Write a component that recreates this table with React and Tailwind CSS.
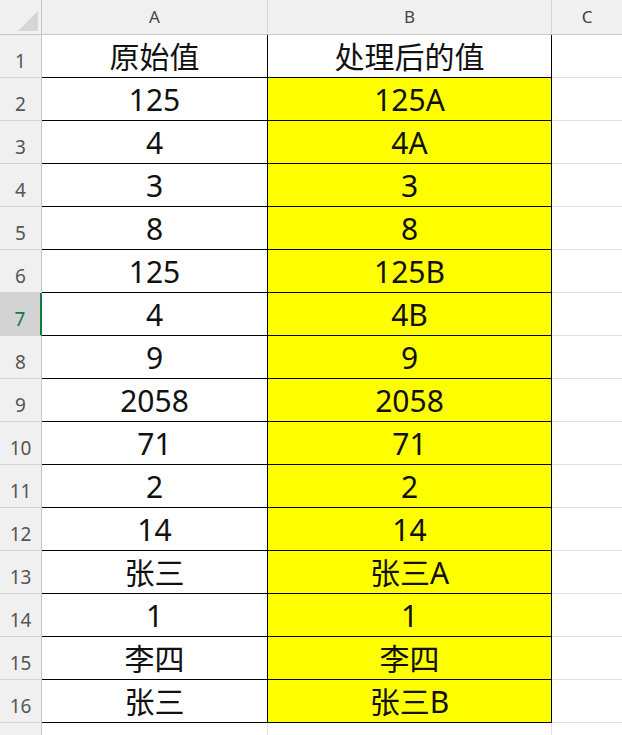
const rows = [
  ["原始值", "处理后的值", true],
  ["125", "125A"],
  ["4", "4A"],
  ["3", "3"],
  ["8", "8"],
  ["125", "125B"],
  ["4", "4B"],
  ["9", "9"],
  ["2058", "2058"],
  ["71", "71"],
  ["2", "2"],
  ["14", "14"],
  ["张三", "张三A"],
  ["1", "1"],
  ["李四", "李四"],
  ["张三", "张三B"],
];

const font = { fontFamily: '"Noto Sans", "Noto Sans CJK SC", sans-serif' };

function RowLabel({ n, selected }) {
  return (
    <div
      className={
        "w-[42px] shrink-0 flex items-end justify-center pb-[2px] text-[19px] border-b border-[#d4d4d4] " +
        (selected
          ? "bg-[#d3d3d3] text-[#107c41] border-r-2 border-r-[#107c41]"
          : "bg-[#f0f0f0] text-[#555] border-r border-r-[#c6c6c6]")
      }
    >
      {n}
    </div>
  );
}

export default function App() {
  return (
    <div className="w-[622px] h-[735px] overflow-hidden bg-white" style={font}>
      <div className="flex h-[35px] bg-[#f0f0f0] border-b border-[#c6c6c6] text-[17px] text-[#444]">
        <div className="w-[42px] shrink-0 border-r border-[#c6c6c6] flex items-end justify-end pr-[3px] pb-[3px]">
          <svg width="20" height="20" viewBox="0 0 20 20">
            <polygon points="20,0 20,20 0,20" fill="#d6d6d6" />
          </svg>
        </div>
        <div className="w-[226px] shrink-0 border-r border-[#d4d4d4] flex items-center justify-center">A</div>
        <div className="w-[284px] shrink-0 border-r border-[#d4d4d4] flex items-center justify-center">B</div>
        <div className="flex-1 flex items-center justify-center">C</div>
      </div>
      {rows.map(([a, b, head], i) => (
        <div key={i} className="flex h-[43px]">
          <RowLabel n={i + 1} selected={i === 6} />
          <div className="w-[226px] shrink-0 border-b border-r border-black flex items-end justify-center text-[30px] text-[#111] leading-none">
            <span className="pb-[5px]">{a}</span>
          </div>
          <div
            className={
              "w-[284px] shrink-0 border-b border-r border-black flex items-end justify-center text-[30px] text-[#111] leading-none " +
              (head ? "bg-white" : "bg-[#ffff00]")
            }
          >
            <span className="pb-[5px]">{b}</span>
          </div>
          <div className="flex-1 border-b border-[#e1e1e1]" />
        </div>
      ))}
      <div className="flex h-[43px]">
        <RowLabel n={17} />
        <div className="w-[226px] shrink-0 border-r border-[#e1e1e1]" />
        <div className="w-[284px] shrink-0 border-r border-[#e1e1e1]" />
        <div className="flex-1" />
      </div>
    </div>
  );
}
